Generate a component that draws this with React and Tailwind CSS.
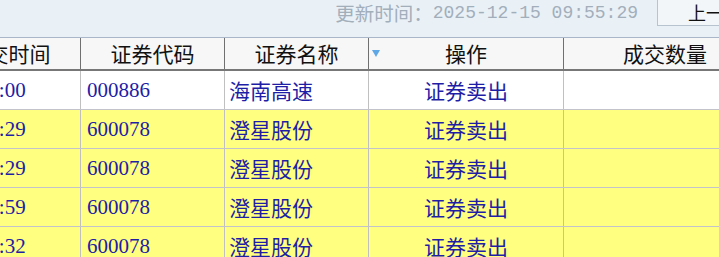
import React from "react";

const CJK = { fontFamily: '"Noto Sans CJK SC", sans-serif' };

const rows = [
  { time: "09:56:00", code: "000886", name: "海南高速", op: "证券卖出", hl: false },
  { time: "09:55:29", code: "600078", name: "澄星股份", op: "证券卖出", hl: true },
  { time: "09:55:29", code: "600078", name: "澄星股份", op: "证券卖出", hl: true },
  { time: "09:54:59", code: "600078", name: "澄星股份", op: "证券卖出", hl: true },
  { time: "09:54:32", code: "600078", name: "澄星股份", op: "证券卖出", hl: true },
];

const TopBar = () => (
  <div className="flex justify-end h-[38px] bg-[#e9f1f6] border-b border-[#a9b6c9] overflow-hidden">
    <div
      className="h-[26px] flex items-center text-[18px] text-[#a3aebb] whitespace-nowrap"
      style={{ fontFamily: '"Liberation Mono", "Noto Sans CJK SC", monospace' }}
    >
      <span className="text-[19.5px]" style={CJK}>更新时间：</span>
      2025-12-15 09:55:29
    </div>
    <button
      className="ml-[19px] -mr-[28px] w-[90px] h-[26px] shrink-0 flex items-center pl-[30px] text-[18px] text-[#111] bg-[#f2f6f9] border-l border-b border-r border-[#b7c3cf]"
      style={CJK}
    >
      上一页
    </button>
  </div>
);

const HeaderRow = () => (
  <div className="flex h-[33px] bg-[#f7f7f7] border-b-2 border-[#777] text-[21px] text-[#111] whitespace-nowrap" style={CJK}>
    <div className="w-[144px] -ml-[63px] shrink-0 flex items-center justify-center border-r border-[#707070]">成交时间</div>
    <div className="w-[144px] shrink-0 flex items-center justify-center border-r border-[#707070]">证券代码</div>
    <div className="w-[144px] shrink-0 flex items-center justify-center border-r border-[#707070]">证券名称</div>
    <div className="relative w-[195px] shrink-0 flex items-center justify-center border-r border-[#707070]">
      <svg className="absolute left-[3px] top-[12px]" width="8" height="7" viewBox="0 0 8 7">
        <path d="M0 0 L8 0 L4 7 Z" fill="#5ea7e6" />
      </svg>
      操作
    </div>
    <div className="w-[202px] shrink-0 flex items-center justify-center">成交数量</div>
  </div>
);

const DataRow = ({ r }) => (
  <div
    className={`flex h-[39px] border-b border-[#c3c3cb] text-[21px] text-[#1e1ea6] whitespace-nowrap ${r.hl ? "bg-[#ffff80]" : "bg-white"}`}
    style={{ fontFamily: '"Liberation Serif", "Noto Sans CJK SC", serif' }}
  >
    <div className="w-[144px] -ml-[63px] shrink-0 flex items-center pt-[2px] pl-[14px] border-r border-[#c0c0c0]">{r.time}</div>
    <div className="w-[144px] shrink-0 flex items-center pt-[2px] pl-[6px] border-r border-[#c0c0c0]">{r.code}</div>
    <div className="w-[144px] shrink-0 flex items-center pt-[2px] pl-[4px] border-r border-[#c0c0c0]" style={CJK}>{r.name}</div>
    <div className="w-[195px] shrink-0 flex items-center justify-center pt-[2px] border-r border-[#c0c0c0]" style={CJK}>{r.op}</div>
    <div className="w-[202px] shrink-0" />
  </div>
);

export default function App() {
  return (
    <div className="w-[719px] h-[257px] overflow-hidden bg-white">
      <TopBar />
      <div className="overflow-hidden">
        <HeaderRow />
        {rows.map((r, i) => (
          <DataRow key={i} r={r} />
        ))}
      </div>
    </div>
  );
}
